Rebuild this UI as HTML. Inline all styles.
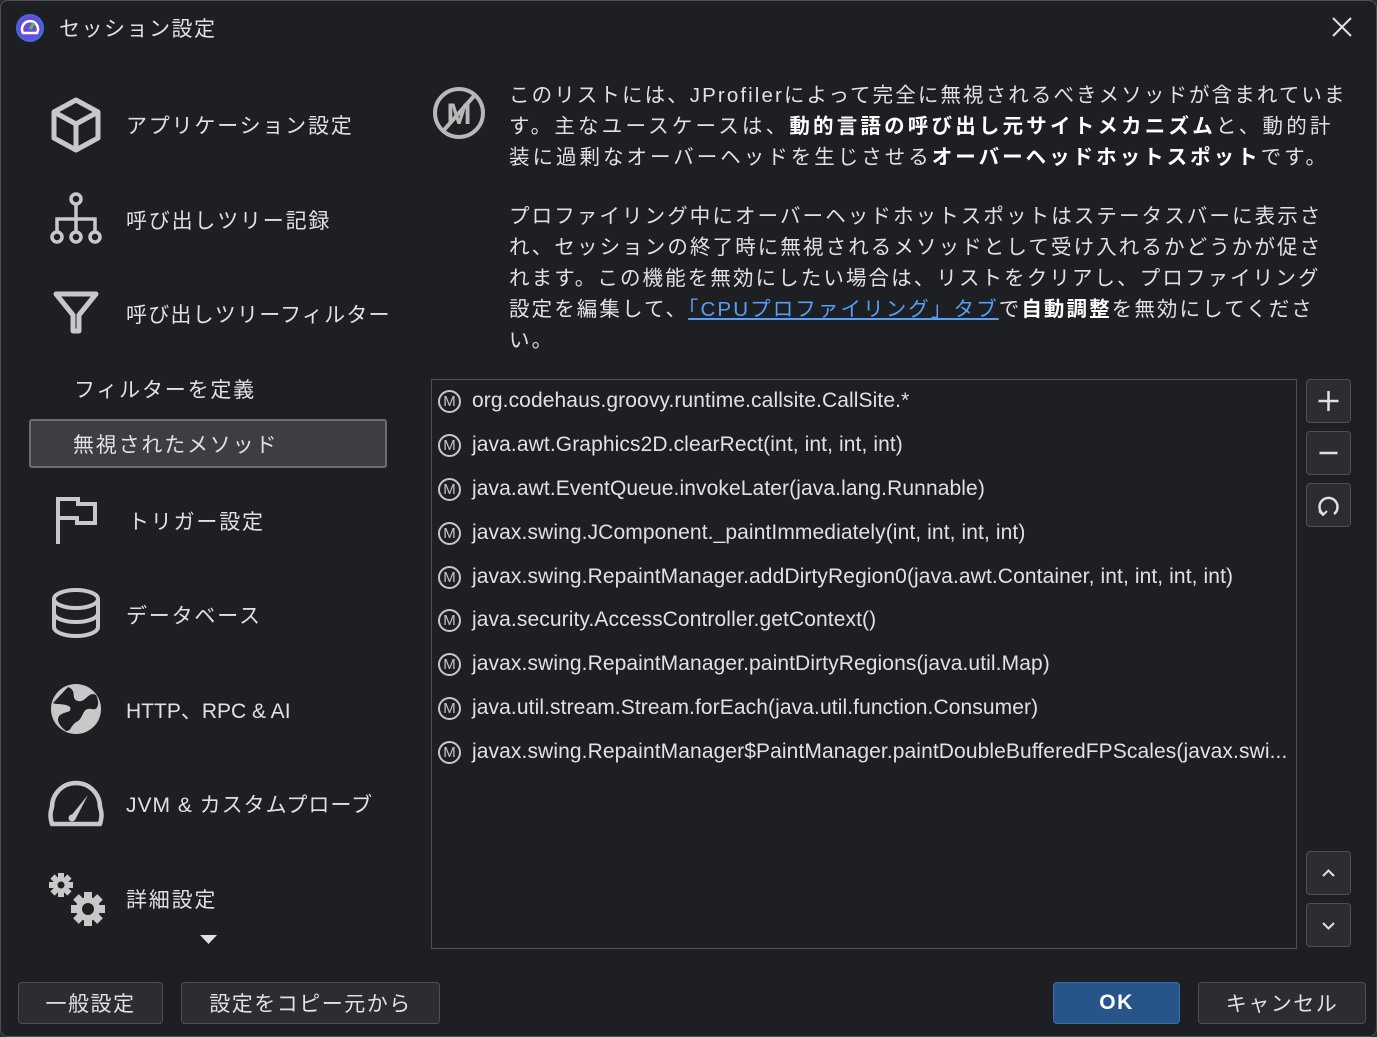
<!DOCTYPE html>
<html><head><meta charset="utf-8"><style>
*{margin:0;padding:0;box-sizing:border-box}
html,body{width:1377px;height:1037px;overflow:hidden;background:#2b2d30}
body{font-family:"Liberation Sans","Noto Sans CJK JP",sans-serif;color:#dcdcdc}
.win{position:absolute;left:0;top:0;width:1377px;height:1037px;background:#1e1f22;border:1px solid #4e5054;border-radius:8px}
.abs{position:absolute}
.nav{position:absolute;left:125px;font-size:21px;color:#dfe1e5;white-space:nowrap;letter-spacing:1.8px}
.ic{position:absolute}
.desc{position:absolute;left:508px;font-size:20.5px;color:#dfe1e5;white-space:nowrap;line-height:31px;letter-spacing:2.1px}
.desc b{color:#fff}
.list{position:absolute;left:430px;top:378px;width:866px;height:570px;border:1px solid #4e5054;overflow:hidden}
.row{position:absolute;left:6px;height:24px;font-size:21px;color:#dfe1e5;white-space:nowrap;display:flex;align-items:center;letter-spacing:0.1px}
.m{width:23px;height:23px;border:2px solid #c8c8c8;border-radius:50%;font-size:15px;color:#c8c8c8;display:flex;align-items:center;justify-content:center;margin-right:11px;letter-spacing:0}
.sb{position:absolute;left:1305px;width:45px;height:44px;border:1px solid #4e5054;border-radius:4px;background:#2b2d30}
.btn{position:absolute;top:981px;height:42px;border:1px solid #4e5054;border-radius:4px;background:#2b2d30;font-size:21px;color:#dfe1e5;display:flex;align-items:center;justify-content:center;letter-spacing:1.5px}
</style></head><body>
<div class="win">
<svg class="abs" style="left:15px;top:13px" width="28" height="28" viewBox="0 0 28 28"><circle cx="14" cy="14" r="13" fill="#6a4ad8"/><circle cx="14" cy="14" r="13" fill="none" stroke="#3f6de0" stroke-width="2"/><path d="M7 19 A8 8 0 1 1 21 19 Z" fill="none" stroke="#fff" stroke-width="2.5"/><path d="M14 15 L18 9" stroke="#4fc34f" stroke-width="3"/></svg>
<div class="abs" style="left:58px;top:12px;font-size:21px;color:#dfe1e5;letter-spacing:1.5px">セッション設定</div>
<svg class="abs" style="left:1330px;top:15px" width="22" height="22" viewBox="0 0 22 22"><path d="M2 2L20 20M20 2L2 20" stroke="#dfe1e5" stroke-width="2"/></svg>

<svg class="ic" style="left:48px;top:96px" width="54" height="56" viewBox="0 0 54 56"><path d="M27 3 L49 15 L49 41 L27 53 L5 41 L5 15 Z M5 15 L27 27 L49 15 M27 27 L27 53" fill="none" stroke="#c8c8c8" stroke-width="5" stroke-linejoin="round"/></svg>
<svg class="ic" style="left:47px;top:190px" width="56" height="56" viewBox="0 0 56 56"><circle cx="28" cy="8" r="5" fill="none" stroke="#c8c8c8" stroke-width="3.5"/><path d="M28 13 V28 M9 42 V28 H47 V42 M28 28 V42" fill="none" stroke="#c8c8c8" stroke-width="3.5"/><circle cx="9" cy="46" r="5" fill="none" stroke="#c8c8c8" stroke-width="3.5"/><circle cx="28" cy="46" r="5" fill="none" stroke="#c8c8c8" stroke-width="3.5"/><circle cx="47" cy="46" r="5" fill="none" stroke="#c8c8c8" stroke-width="3.5"/></svg>
<svg class="ic" style="left:52px;top:290px" width="46" height="44" viewBox="0 0 46 44"><path d="M3 3 H43 L26 24 V40 H20 V24 Z" fill="none" stroke="#c8c8c8" stroke-width="5" stroke-linejoin="round"/></svg>
<svg class="ic" style="left:54px;top:495px" width="44" height="50" viewBox="0 0 44 50"><path d="M3 48 V3 H23 V8 H40 V27 H22 V22 H3" fill="none" stroke="#c8c8c8" stroke-width="4"/></svg>
<svg class="ic" style="left:49px;top:585px" width="52" height="54" viewBox="0 0 52 54"><ellipse cx="26" cy="13" rx="22" ry="9" fill="none" stroke="#c8c8c8" stroke-width="4"/><path d="M4 13 V41 A22 9 0 0 0 48 41 V13 M4 27 A22 9 0 0 0 48 27" fill="none" stroke="#c8c8c8" stroke-width="4"/></svg>
<svg class="ic" style="left:47px;top:680px" width="56" height="56" viewBox="0 0 56 56"><circle cx="28" cy="28" r="25" fill="#c8c8c8"/><path d="M20 6 C30 10 22 18 30 20 C38 22 40 10 48 14 C52 22 50 30 44 28 C34 26 36 36 30 40 C22 44 24 50 18 50 C10 44 8 38 12 34 C18 30 24 32 22 26 C18 22 8 24 5 22" fill="#1e1f22"/></svg>
<svg class="ic" style="left:47px;top:776px" width="56" height="52" viewBox="0 0 56 52"><path d="M4 47 C2 40 2 36 4 30 A24 24 0 0 1 52 30 C54 36 54 40 52 47 Z" fill="none" stroke="#c8c8c8" stroke-width="4.5" stroke-linejoin="round"/><path d="M22 40 L40 18 L27 43 Z" fill="#c8c8c8"/><circle cx="24" cy="41" r="3.5" fill="#c8c8c8"/></svg>
<svg class="ic" style="left:47px;top:868px" width="58" height="60" viewBox="0 0 58 60"><g fill="#c8c8c8"><circle cx="13" cy="16" r="8"/><rect x="10" y="4" width="6" height="24"/><rect x="1" y="13" width="24" height="6"/><rect x="10" y="4" width="6" height="24" transform="rotate(45 13 16)"/><rect x="10" y="4" width="6" height="24" transform="rotate(-45 13 16)"/><circle cx="40" cy="40" r="12"/><rect x="36" y="23" width="8" height="34"/><rect x="23" y="36" width="34" height="8"/><rect x="36" y="23" width="8" height="34" transform="rotate(45 40 40)"/><rect x="36" y="23" width="8" height="34" transform="rotate(-45 40 40)"/></g><circle cx="13" cy="16" r="3.5" fill="#1e1f22"/><circle cx="40" cy="40" r="6" fill="#1e1f22"/></svg>

<div class="nav" style="top:109px">アプリケーション設定</div>
<div class="nav" style="top:204px">呼び出しツリー記録</div>
<div class="nav" style="top:298px;letter-spacing:1.2px">呼び出しツリーフィルター</div>
<div class="nav" style="left:73px;top:373px">フィルターを定義</div>
<div class="abs" style="left:28px;top:418px;width:358px;height:49px;background:#3c3e41;border:2px solid #6a6c70;border-radius:3px"></div>
<div class="nav" style="left:72px;top:428px">無視されたメソッド</div>
<div class="nav" style="left:127px;top:505px">トリガー設定</div>
<div class="nav" style="top:599px">データベース</div>
<div class="nav" style="top:694px;letter-spacing:0">HTTP、RPC &amp; AI</div>
<div class="nav" style="top:788px;letter-spacing:1px">JVM &amp; カスタムプローブ</div>
<div class="nav" style="top:883px">詳細設定</div>
<svg class="abs" style="left:199px;top:934px" width="17" height="9"><path d="M0 0H17L8.5 9Z" fill="#dfe1e5"/></svg>

<svg class="abs" style="left:431px;top:85px" width="54" height="54" viewBox="0 0 54 54"><circle cx="27" cy="27" r="24" fill="none" stroke="#b8b8b8" stroke-width="4"/><text x="27" y="38" font-family="Liberation Sans" font-weight="bold" font-size="30" fill="#b8b8b8" text-anchor="middle">M</text><path d="M12 44 L42 10" stroke="#b8b8b8" stroke-width="4"/></svg>
<div class="desc" style="top:79px">このリストには、JProfilerによって完全に無視されるべきメソッドが含まれていま<br><span style="letter-spacing:3.2px">す。主なユースケースは、<b>動的言語の呼び出し元サイトメカニズム</b>と、動的計</span><br><span style="letter-spacing:3px">装に過剰なオーバーヘッドを生じさせる<b>オーバーヘッドホットスポット</b>です。</span></div>
<div class="desc" style="top:200px">プロファイリング中にオーバーヘッドホットスポットはステータスバーに表示さ<br>れ、セッションの終了時に無視されるメソッドとして受け入れるかどうかが促さ<br>れます。この機能を無効にしたい場合は、リストをクリアし、プロファイリング<br>設定を編集して、<span style="color:#589df6;text-decoration:underline">「CPUプロファイリング」タブ</span>で<b>自動調整</b>を無効にしてくださ<br>い。</div>

<div class="list">
<div class="row" style="top:9px"><span class="m">M</span>org.codehaus.groovy.runtime.callsite.CallSite.*</div>
<div class="row" style="top:53px"><span class="m">M</span>java.awt.Graphics2D.clearRect(int, int, int, int)</div>
<div class="row" style="top:97px"><span class="m">M</span>java.awt.EventQueue.invokeLater(java.lang.Runnable)</div>
<div class="row" style="top:141px"><span class="m">M</span>javax.swing.JComponent._paintImmediately(int, int, int, int)</div>
<div class="row" style="top:185px"><span class="m">M</span>javax.swing.RepaintManager.addDirtyRegion0(java.awt.Container, int, int, int, int)</div>
<div class="row" style="top:228px"><span class="m">M</span>java.security.AccessController.getContext()</div>
<div class="row" style="top:272px"><span class="m">M</span>javax.swing.RepaintManager.paintDirtyRegions(java.util.Map)</div>
<div class="row" style="top:316px"><span class="m">M</span>java.util.stream.Stream.forEach(java.util.function.Consumer)</div>
<div class="row" style="top:360px"><span class="m">M</span>javax.swing.RepaintManager$PaintManager.paintDoubleBufferedFPScales(javax.swi...</div>
</div>

<div class="sb" style="top:378px"><svg width="43" height="42"><path d="M21.5 11V31M11.5 21H31.5" stroke="#dfe1e5" stroke-width="2.5"/></svg></div>
<div class="sb" style="top:430px"><svg width="43" height="42"><path d="M12.5 21H30.5" stroke="#dfe1e5" stroke-width="2.5"/></svg></div>
<div class="sb" style="top:482px"><svg width="43" height="42"><path d="M16 30 A9 9 0 1 1 27 30" fill="none" stroke="#dfe1e5" stroke-width="2.5"/><path d="M12 27 L16 31 L20 27" fill="none" stroke="#dfe1e5" stroke-width="2"/></svg></div>
<div class="sb" style="top:850px"><svg width="43" height="42"><path d="M16 24L21.5 18.5L27 24" fill="none" stroke="#dfe1e5" stroke-width="2"/></svg></div>
<div class="sb" style="top:902px"><svg width="43" height="42"><path d="M16 19L21.5 24.5L27 19" fill="none" stroke="#dfe1e5" stroke-width="2"/></svg></div>

<div class="btn" style="left:17px;width:145px">一般設定</div>
<div class="btn" style="left:180px;width:259px">設定をコピー元から</div>
<div class="btn" style="left:1052px;width:127px;background:#285589;border-color:#3a6db0;font-weight:bold;color:#fff">OK</div>
<div class="btn" style="left:1197px;width:168px">キャンセル</div>
</div>
</body></html>
